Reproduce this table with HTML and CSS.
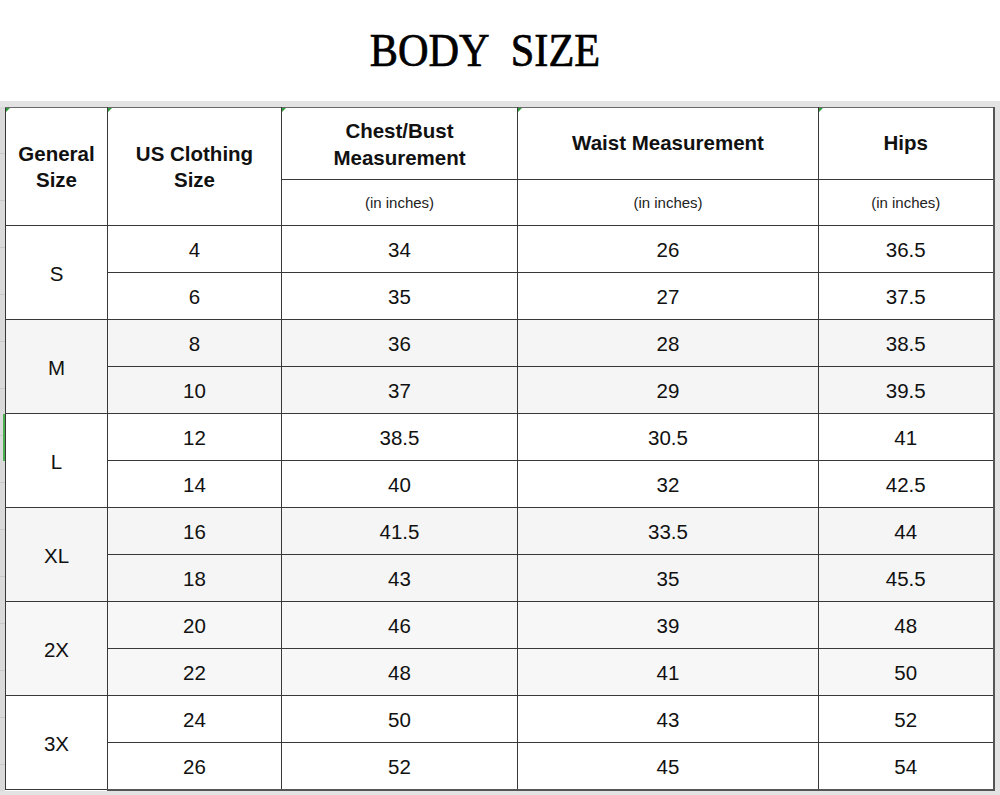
FILE: index.html
```html
<!DOCTYPE html>
<html>
<head>
<meta charset="utf-8">
<link rel="stylesheet" href="styles.css">
</head>
<body>
<div class="page">
  <header class="title-bar"><h1 class="title">BODY&nbsp;&nbsp;SIZE</h1></header>
  <div class="sheet">
    <div class="rowheads">
      <span class="sel"></span>
    </div>
    <table class="chart">
      <colgroup>
        <col class="c1"><col class="c2"><col class="c3"><col class="c4"><col class="c5">
      </colgroup>
      <thead>
        <tr class="h1">
          <th rowspan="2" class="mark">General<br>Size</th>
          <th rowspan="2" class="mark">US Clothing<br>Size</th>
          <th class="mark">Chest/Bust<br>Measurement</th>
          <th class="mark">Waist Measurement</th>
          <th class="mark">Hips</th>
        </tr>
        <tr class="h2">
          <td class="unit">(in inches)</td>
          <td class="unit">(in inches)</td>
          <td class="unit">(in inches)</td>
        </tr>
      </thead>
      <tbody>
        <tr class="w"><td rowspan="2" class="gen">S</td><td>4</td><td>34</td><td>26</td><td>36.5</td></tr>
        <tr class="w"><td>6</td><td>35</td><td>27</td><td>37.5</td></tr>
        <tr class="g"><td rowspan="2" class="gen">M</td><td>8</td><td>36</td><td>28</td><td>38.5</td></tr>
        <tr class="g"><td>10</td><td>37</td><td>29</td><td>39.5</td></tr>
        <tr class="w"><td rowspan="2" class="gen">L</td><td>12</td><td>38.5</td><td>30.5</td><td>41</td></tr>
        <tr class="w"><td>14</td><td>40</td><td>32</td><td>42.5</td></tr>
        <tr class="g"><td rowspan="2" class="gen">XL</td><td>16</td><td>41.5</td><td>33.5</td><td>44</td></tr>
        <tr class="g"><td>18</td><td>43</td><td>35</td><td>45.5</td></tr>
        <tr class="g2"><td rowspan="2" class="gen">2X</td><td>20</td><td>46</td><td>39</td><td>48</td></tr>
        <tr class="g2"><td>22</td><td>48</td><td>41</td><td>50</td></tr>
        <tr class="w"><td rowspan="2" class="gen">3X</td><td>24</td><td>50</td><td>43</td><td>52</td></tr>
        <tr class="w"><td>26</td><td>52</td><td>45</td><td>54</td></tr>
      </tbody>
    </table>
  </div>
</div>
</body>
</html>
```

FILE: styles.css
```css
html, body {
  margin: 0;
  padding: 0;
  background: #ffffff;
}

.page {
  width: 1000px;
  height: 795px;
  overflow: hidden;
  font-family: "Liberation Sans", Arial, sans-serif;
  color: #111;
}

.title-bar {
  height: 101px;
  display: flex;
  justify-content: center;
  padding-right: 30px;
  box-sizing: border-box;
}

.title {
  margin: 0;
  padding-top: 22px;
  font-family: "Liberation Serif", "Times New Roman", serif;
  font-weight: normal;
  font-size: 47px;
  line-height: 56px;
  color: #000;
  -webkit-text-stroke: 0.7px #000;
  transform: scaleX(0.9);
  white-space: nowrap;
}

.sheet {
  display: flex;
  background: #e3e3e3;
  padding: 6px 7px 6px 0;
}

.rowheads {
  width: 5px;
  flex: none;
  position: relative;
  background: repeating-linear-gradient(to bottom, #dadada 0, #dadada 46px, #c8c8c8 46px, #c8c8c8 47px);
}

.sel {
  position: absolute;
  left: 3px;
  top: 307px;
  width: 2px;
  height: 47px;
  background: #4caf50;
}

.chart {
  border-collapse: collapse;
  table-layout: fixed;
  width: 988px;
  background: #fff;
}

.c1 { width: 102px; }
.c2 { width: 174px; }
.c3 { width: 236px; }
.c4 { width: 301px; }
.c5 { width: 175px; }

.chart th,
.chart td {
  border: 1px solid #383838;
  padding: 0;
  text-align: center;
  vertical-align: middle;
}

.chart th {
  font-weight: bold;
  font-size: 20.5px;
  line-height: 26px;
  color: #111;
  position: relative;
}

.chart thead tr.h1 th {
  border-top: 1px solid #6a6a6a;
}

.mark::before {
  content: "";
  position: absolute;
  left: 0;
  top: 0;
  width: 0;
  height: 0;
  border-top: 4px solid #2e9d3a;
  border-right: 4px solid transparent;
}

.h1 { height: 72px; }
.h1 th:nth-child(3) { line-height: 27px; padding-top: 1px; }
.h1 th:nth-child(4), .h1 th:nth-child(5) { padding-bottom: 2px; }
.h2 { height: 46px; }

.unit {
  font-size: 15px;
  color: #222;
}

.chart tbody td {
  font-size: 20.5px;
  line-height: 24px;
  color: #111;
  padding-top: 2px;
}

.chart tbody tr { height: 47px; }

.chart tbody tr.g td { background: #f5f5f5; }
.chart tbody tr.g2 td { background: #f7f7f7; }
.chart tbody tr.w td { background: #ffffff; }

.chart tbody tr:last-child td {
  border-bottom: 2px solid #555;
}

.chart th:last-child,
.chart td:last-child {
  border-right: 2px solid #555;
}
```
